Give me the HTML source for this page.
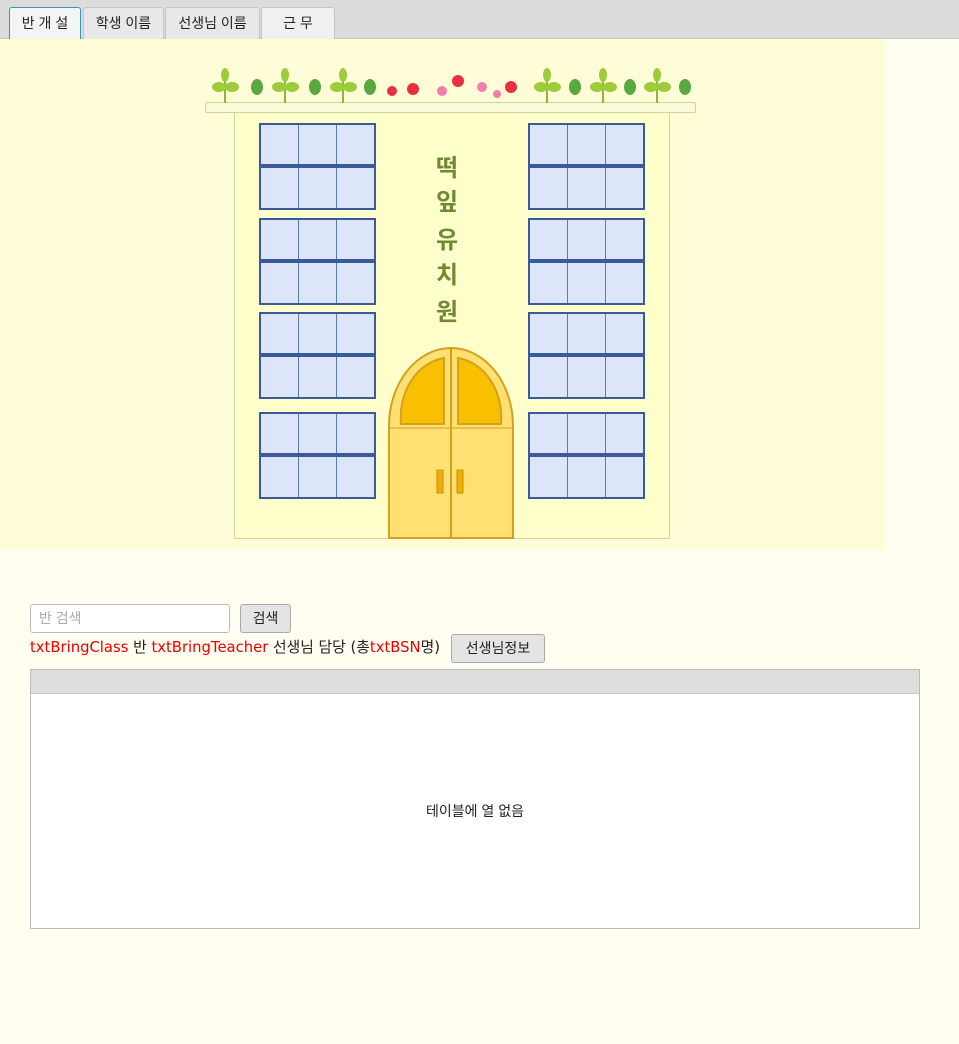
<!DOCTYPE html>
<html><head><meta charset="utf-8"><style>
body{margin:0;width:959px;height:1044px;background:#fffef0;font-family:"Liberation Sans","Noto Sans CJK KR",sans-serif;font-size:14px;color:#222;position:relative;overflow:hidden}
.bar{position:absolute;left:0;top:0;width:959px;height:38px;background:#dcdcdc;border-bottom:1px solid #c8c8c8}
.tab{position:absolute;top:7px;height:31px;border:1px solid #c5c5c5;border-bottom:none;border-radius:3px 3px 0 0;background:#e8e8e8;line-height:31px;text-align:center;font-size:14px}
.img{position:absolute;left:0;top:39px;width:885px;height:511px;background:#fffdd8}
.win{position:absolute;width:113px;height:83px;border:2px solid #3a5a9a;background:#dde6f8}
.win i{position:absolute;top:0;bottom:0;width:1px;background:#5a7ac0}
.win b{position:absolute;left:0;right:0;top:39px;height:4px;background:#3a5a9a}
.tx{position:absolute;left:436px;font-size:24px;font-weight:bold;color:#6f8a32}
.red{color:#e00}
.btn{position:absolute;border:1px solid #aaa;border-radius:3px;background:#e4e4e4;font-size:14px;text-align:center}
</style></head><body>
<div class="bar"></div>
<div class="tab" style="left:9px;width:70px;background:#f4f4f4;border-color:#39b;">반 개 설</div>
<div class="tab" style="left:83px;width:79px">학생 이름</div>
<div class="tab" style="left:165px;width:93px">선생님 이름</div>
<div class="tab" style="left:261px;width:72px;background:#f0f0f0">근 무</div>
<div class="img"></div>
<div style="position:absolute;left:205px;top:102px;width:489px;height:9px;background:#fafad8;border:1px solid #c8d898;border-radius:2px"></div>
<div style="position:absolute;left:234px;top:112px;width:434px;height:425px;background:#ffffcc;border:1px solid #c8d898"></div>
<svg style="position:absolute;left:205px;top:65px" width="490" height="40">
<g stroke="#8aba30" stroke-width="2"><path d="M20,38V15M80,38V15M138,38V15M342,38V15M398,38V15M452,38V15"/></g>
<g fill="#9ccc3a"><ellipse cx="14" cy="22" rx="7" ry="5"/><ellipse cx="27" cy="22" rx="7" ry="5"/><ellipse cx="20" cy="10" rx="4" ry="7"/><ellipse cx="74" cy="22" rx="7" ry="5"/><ellipse cx="87" cy="22" rx="7" ry="5"/><ellipse cx="80" cy="10" rx="4" ry="7"/><ellipse cx="132" cy="22" rx="7" ry="5"/><ellipse cx="145" cy="22" rx="7" ry="5"/><ellipse cx="138" cy="10" rx="4" ry="7"/><ellipse cx="336" cy="22" rx="7" ry="5"/><ellipse cx="349" cy="22" rx="7" ry="5"/><ellipse cx="342" cy="10" rx="4" ry="7"/><ellipse cx="392" cy="22" rx="7" ry="5"/><ellipse cx="405" cy="22" rx="7" ry="5"/><ellipse cx="398" cy="10" rx="4" ry="7"/><ellipse cx="446" cy="22" rx="7" ry="5"/><ellipse cx="459" cy="22" rx="7" ry="5"/><ellipse cx="452" cy="10" rx="4" ry="7"/></g>
<g fill="#5aa840"><ellipse cx="52" cy="22" rx="6" ry="8"/><ellipse cx="110" cy="22" rx="6" ry="8"/><ellipse cx="165" cy="22" rx="6" ry="8"/><ellipse cx="370" cy="22" rx="6" ry="8"/><ellipse cx="425" cy="22" rx="6" ry="8"/><ellipse cx="480" cy="22" rx="6" ry="8"/></g>
<g fill="#e83040"><circle cx="187" cy="26" r="5"/><circle cx="208" cy="24" r="6"/><circle cx="253" cy="16" r="6"/><circle cx="306" cy="22" r="6"/></g>
<g fill="#f080a8"><circle cx="237" cy="26" r="5"/><circle cx="277" cy="22" r="5"/><circle cx="292" cy="29" r="4"/></g>
</svg>
<div class="win" style="left:259px;top:123px"><i style="left:37px"></i><i style="left:75px"></i><b></b></div>
<div class="win" style="left:259px;top:218px"><i style="left:37px"></i><i style="left:75px"></i><b></b></div>
<div class="win" style="left:259px;top:312px"><i style="left:37px"></i><i style="left:75px"></i><b></b></div>
<div class="win" style="left:259px;top:412px"><i style="left:37px"></i><i style="left:75px"></i><b></b></div>
<div class="win" style="left:528px;top:123px"><i style="left:37px"></i><i style="left:75px"></i><b></b></div>
<div class="win" style="left:528px;top:218px"><i style="left:37px"></i><i style="left:75px"></i><b></b></div>
<div class="win" style="left:528px;top:312px"><i style="left:37px"></i><i style="left:75px"></i><b></b></div>
<div class="win" style="left:528px;top:412px"><i style="left:37px"></i><i style="left:75px"></i><b></b></div>
<div class="tx" style="top:148px">떡</div>
<div class="tx" style="top:182px">잎</div>
<div class="tx" style="top:220px">유</div>
<div class="tx" style="top:255px">치</div>
<div class="tx" style="top:292px">원</div>
<svg style="position:absolute;left:388px;top:346px" width="127" height="193">
<path d="M1,192 V80 A62,78 0 0 1 125,80 V192 Z" fill="#ffe070" stroke="#d4a020" stroke-width="2"/>
<path d="M13,78 A50,60 0 0 1 56,12 V78 Z" fill="#f8c000" stroke="#d4a020" stroke-width="2"/>
<path d="M70,12 A50,60 0 0 1 113,78 H70 Z" fill="#f8c000" stroke="#d4a020" stroke-width="2"/>
<line x1="63" y1="2" x2="63" y2="192" stroke="#d4a020" stroke-width="2"/>
<line x1="1" y1="82" x2="125" y2="82" stroke="#d4a020" stroke-width="1"/>
<rect x="49" y="124" width="6" height="23" fill="#f0b000" stroke="#c89010"/>
<rect x="69" y="124" width="6" height="23" fill="#f0b000" stroke="#c89010"/>
</svg>
<div style="position:absolute;left:30px;top:604px;border:1px solid #bbb;border-radius:3px;background:#fff;color:#aaa;line-height:27px;padding-left:8px;box-sizing:border-box;width:200px;height:29px">반 검색</div>
<div class="btn" style="left:240px;top:604px;width:49px;height:27px;line-height:27px">검색</div>
<div style="position:absolute;left:30px;top:637px;line-height:22px;font-family:'DejaVu Sans','Noto Sans CJK KR',sans-serif;font-size:14.8px;white-space:nowrap"><span class="red">txtBringClass</span> 반 <span class="red">txtBringTeacher</span> 선생님 담당 (총<span class="red">txtBSN</span>명)</div>
<div class="btn" style="left:451px;top:634px;width:92px;height:27px;line-height:27px">선생님정보</div>
<div style="position:absolute;left:30px;top:669px;width:888px;height:258px;border:1px solid #bbb;background:#fff">
<div style="height:23px;background:#dedede;border-bottom:1px solid #c8c8c8"></div>
<div style="text-align:center;margin-top:107px">테이블에 열 없음</div>
</div>
</body></html>
